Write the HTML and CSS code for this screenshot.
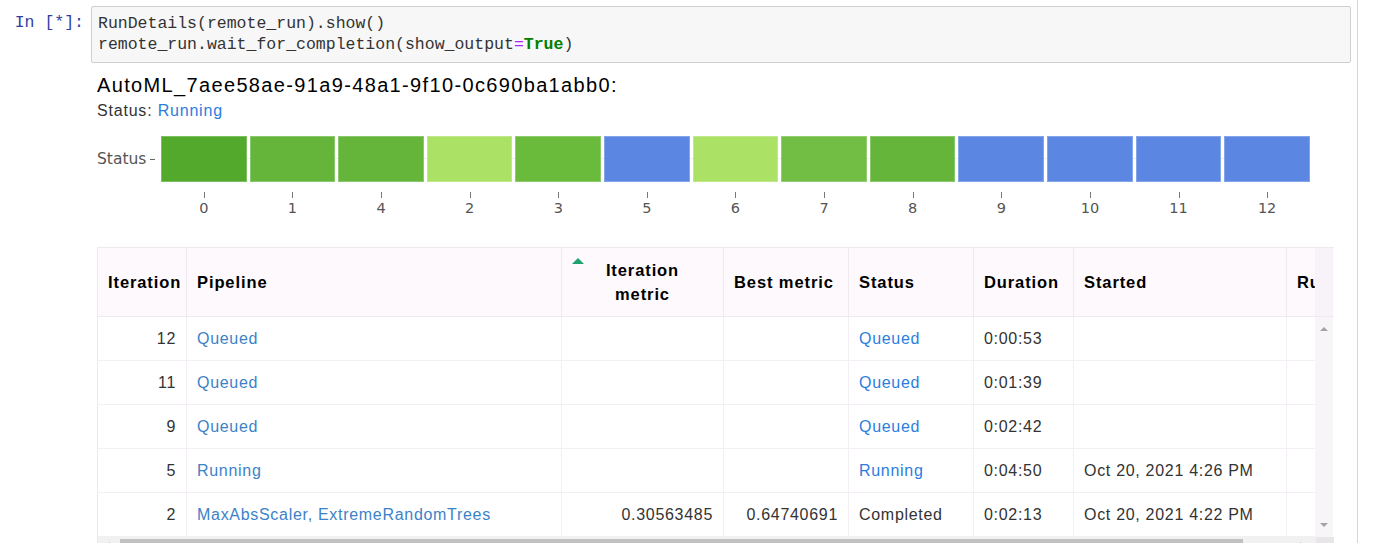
FILE: index.html
```html
<!DOCTYPE html>
<html>
<head>
<meta charset="utf-8">
<link rel="stylesheet" href="styles.css">
</head>
<body>
<div class="notebook">
  <div class="cell">
    <div class="prompt">In&nbsp;[*]:</div>
    <div class="input"><div class="code">RunDetails(remote_run).show()
remote_run.wait_for_completion(show_output<span class="op">=</span><span class="kw">True</span>)</div></div>
  </div>
  <div class="output">
    <div class="title">AutoML_7aee58ae-91a9-48a1-9f10-0c690ba1abb0:</div>
    <div class="status">Status: <span class="blue">Running</span></div>
    <div class="chart">
      <div class="ylabel"><span>Status</span><span class="ytick"></span></div>
      <div class="plot">
        <div class="bars">
          <div class="bar c0"></div>
          <div class="bar c1"></div>
          <div class="bar c1"></div>
          <div class="bar c2"></div>
          <div class="bar c3"></div>
          <div class="bar blue-bar"></div>
          <div class="bar c2"></div>
          <div class="bar c4"></div>
          <div class="bar c1"></div>
          <div class="bar blue-bar"></div>
          <div class="bar blue-bar"></div>
          <div class="bar blue-bar"></div>
          <div class="bar blue-bar"></div>
        </div>
        <div class="ticks">
          <div class="tick">0</div><div class="tick">1</div><div class="tick">4</div><div class="tick">2</div><div class="tick">3</div><div class="tick">5</div><div class="tick">6</div><div class="tick">7</div><div class="tick">8</div><div class="tick">9</div><div class="tick">10</div><div class="tick">11</div><div class="tick">12</div>
        </div>
      </div>
    </div>
    <div class="table">
      <div class="thead">
        <div class="grid-clip">
          <div class="row head">
            <div class="cell-h">Iteration</div>
            <div class="cell-h">Pipeline</div>
            <div class="cell-h center sortable"><span class="sort"></span>Iteration<br>metric</div>
            <div class="cell-h">Best metric</div>
            <div class="cell-h">Status</div>
            <div class="cell-h">Duration</div>
            <div class="cell-h">Started</div>
            <div class="cell-h">Run ID</div>
          </div>
        </div>
        <div class="head-corner"></div>
      </div>
      <div class="tbody-wrap">
        <div class="grid-clip">
          <div class="row body">
            <div class="td num">12</div><div class="td"><span class="link">Queued</span></div><div class="td num"></div><div class="td num"></div><div class="td"><span class="link2">Queued</span></div><div class="td">0:00:53</div><div class="td"></div><div class="td"></div>
          </div>
          <div class="row body">
            <div class="td num">11</div><div class="td"><span class="link">Queued</span></div><div class="td num"></div><div class="td num"></div><div class="td"><span class="link2">Queued</span></div><div class="td">0:01:39</div><div class="td"></div><div class="td"></div>
          </div>
          <div class="row body">
            <div class="td num">9</div><div class="td"><span class="link">Queued</span></div><div class="td num"></div><div class="td num"></div><div class="td"><span class="link2">Queued</span></div><div class="td">0:02:42</div><div class="td"></div><div class="td"></div>
          </div>
          <div class="row body">
            <div class="td num">5</div><div class="td"><span class="link">Running</span></div><div class="td num"></div><div class="td num"></div><div class="td"><span class="link2">Running</span></div><div class="td">0:04:50</div><div class="td">Oct 20, 2021 4:26 PM</div><div class="td"></div>
          </div>
          <div class="row body">
            <div class="td num">2</div><div class="td"><span class="link">MaxAbsScaler, ExtremeRandomTrees</span></div><div class="td num">0.30563485</div><div class="td num">0.64740691</div><div class="td">Completed</div><div class="td">0:02:13</div><div class="td">Oct 20, 2021 4:22 PM</div><div class="td"></div>
          </div>
        </div>
        <div class="vscroll">
          <span class="arrow-up"></span>
          <span class="arrow-down"></span>
        </div>
      </div>
      <div class="hscroll">
        <div class="hbtn"><span class="arrow-left"></span></div>
        <div class="htrack"><div class="hthumb"></div></div>
        <div class="hbtn"><span class="arrow-right"></span></div>
        <div class="hcorner"></div>
      </div>
    </div>
  </div>
</div>
</body>
</html>
```
FILE: styles.css
```css
html, body {
  margin: 0;
  padding: 0;
  overflow: hidden;
  background: #fff;
}
body {
  font-family: "Liberation Sans", Arial, sans-serif;
  color: #000;
}
.notebook {
  width: 1358px;
  height: 543px;
  border-right: 1px solid #d6d6d6;
  box-sizing: border-box;
}
.cell {
  display: flex;
  padding-top: 6px;
}
.prompt {
  width: 84px;
  text-align: right;
  font-family: "Liberation Mono", "Courier New", monospace;
  font-size: 16.5px;
  line-height: 21px;
  color: #303f9f;
  padding-top: 6px;
}
.input {
  margin-left: 7px;
  width: 1260px;
  box-sizing: border-box;
  background: #f7f7f7;
  border: 1px solid #cfcfcf;
  border-radius: 2px;
  padding: 6px 6px 7px 6px;
}
.code {
  font-family: "Liberation Mono", "Courier New", monospace;
  font-size: 16.5px;
  line-height: 21px;
  color: #333;
  white-space: pre;
}
.op { color: #aa22ff; }
.kw { color: #008000; font-weight: bold; }

.output {
  margin-left: 97px;
  padding-top: 10px;
}
.title {
  font-size: 20px;
  letter-spacing: 1.35px;
  line-height: 24px;
  color: #000;
}
.status {
  font-size: 16px;
  letter-spacing: 0.8px;
  line-height: 20px;
  color: #333;
  margin-top: 4px;
}
.blue { color: #2b7de0; }

.chart {
  display: flex;
  margin-top: 15px;
  width: 1213px;
}
.ylabel {
  width: 64px;
  height: 46px;
  overflow: hidden;
  display: flex;
  align-items: center;
  justify-content: flex-end;
  white-space: nowrap;
  font-family: "DejaVu Sans", Verdana, sans-serif;
  font-size: 15.5px;
  color: #555;
  padding-right: 6px;
  box-sizing: border-box;
}
.ytick {
  display: inline-block;
  width: 6px;
  height: 1px;
  background: #666;
  margin-left: 4px;
}
.plot {
  width: 1149px;
}
.bars {
  display: flex;
  gap: 3px;
  height: 46px;
  background: linear-gradient(#fff 22px, #eee 22px, #eee 23px, #fff 23px);
}
.bar {
  flex: 1;
  box-shadow: inset 0 0 0 1px rgba(255,255,255,0.25);
}
.c0 { background: #52a92c; }
.c1 { background: #65b53b; }
.c2 { background: #abe165; }
.c3 { background: #6aba3c; }
.c4 { background: #72bd43; }
.blue-bar { background: #5b87e3; }
.ticks {
  display: flex;
  gap: 3px;
  margin-top: 10px;
}
.tick {
  flex: 1;
  text-align: center;
  font-family: "DejaVu Sans", Verdana, sans-serif;
  font-size: 14.5px;
  color: #555;
  line-height: 17px;
  position: relative;
  padding-top: 8px;
}
.tick::before {
  content: "";
  position: absolute;
  top: 0;
  left: 50%;
  width: 1px;
  height: 6px;
  background: #777;
}

.table {
  margin-top: 30px;
  width: 1237px;
  border-top: 1px solid #efe9ef;
  border-left: 1px solid #efe9ef;
  box-sizing: border-box;
}
.thead {
  display: flex;
  background: #fdf9fd;
  border-bottom: 1px solid #efe9ef;
}
.grid-clip {
  width: 1217px;
  overflow: hidden;
}
.head-corner {
  width: 18px;
  background: #f8f3f8;
}
.row {
  display: grid;
  grid-template-columns: 89px 375px 162px 125px 125px 100px 213px 90px;
}
.row.head {
  height: 68px;
}
.cell-h {
  display: flex;
  align-items: center;
  padding: 0 10px;
  font-weight: bold;
  font-size: 16.5px;
  letter-spacing: 0.9px;
  color: #000;
  border-right: 1px solid #efe9ef;
  white-space: nowrap;
  box-sizing: border-box;
}
.cell-h.center {
  justify-content: center;
  text-align: center;
  line-height: 24px;
  white-space: normal;
}
.sortable { position: relative; }
.sort {
  position: absolute;
  left: 10px;
  top: 10px;
  width: 0;
  height: 0;
  border-left: 6px solid transparent;
  border-right: 6px solid transparent;
  border-bottom: 6px solid #1fa36e;
}
.tbody-wrap {
  display: flex;
}
.row.body {
  height: 44px;
}
.td {
  display: flex;
  align-items: center;
  padding: 0 10px;
  font-size: 16px;
  letter-spacing: 0.7px;
  color: #333;
  border-right: 1px solid #f4eff4;
  border-bottom: 1px solid #f4eff4;
  white-space: nowrap;
  box-sizing: border-box;
}
.td.num {
  justify-content: flex-end;
}
.link { color: #3c82c9; }
.link2 { color: #2b7de0; }
.vscroll {
  width: 18px;
  background: #f7f5f7;
  position: relative;
}
.arrow-up, .arrow-down {
  position: absolute;
  left: 5px;
  width: 0;
  height: 0;
  border-left: 4px solid transparent;
  border-right: 4px solid transparent;
}
.arrow-up {
  top: 10px;
  border-bottom: 4px solid #a3a3a3;
}
.arrow-down {
  bottom: 10px;
  border-top: 4px solid #a3a3a3;
}
.hscroll {
  display: flex;
  height: 17px;
  background: #f1f1f1;
}
.hbtn {
  width: 22px;
  position: relative;
}
.htrack {
  width: 1177px;
  position: relative;
}
.hthumb {
  position: absolute;
  left: 0;
  top: 2px;
  width: 1123px;
  height: 13px;
  background: #c1c1c1;
}
.hbtn:last-of-type {
  width: 18px;
}
.arrow-left, .arrow-right {
  position: absolute;
  top: 5px;
  width: 0;
  height: 0;
  border-top: 4px solid transparent;
  border-bottom: 4px solid transparent;
}
.arrow-left { left: 8px; border-right: 4px solid #a3a3a3; }
.arrow-right { left: 6px; border-left: 4px solid #a3a3a3; }
.hcorner {
  width: 18px;
  background: #e9e6e9;
}
```
